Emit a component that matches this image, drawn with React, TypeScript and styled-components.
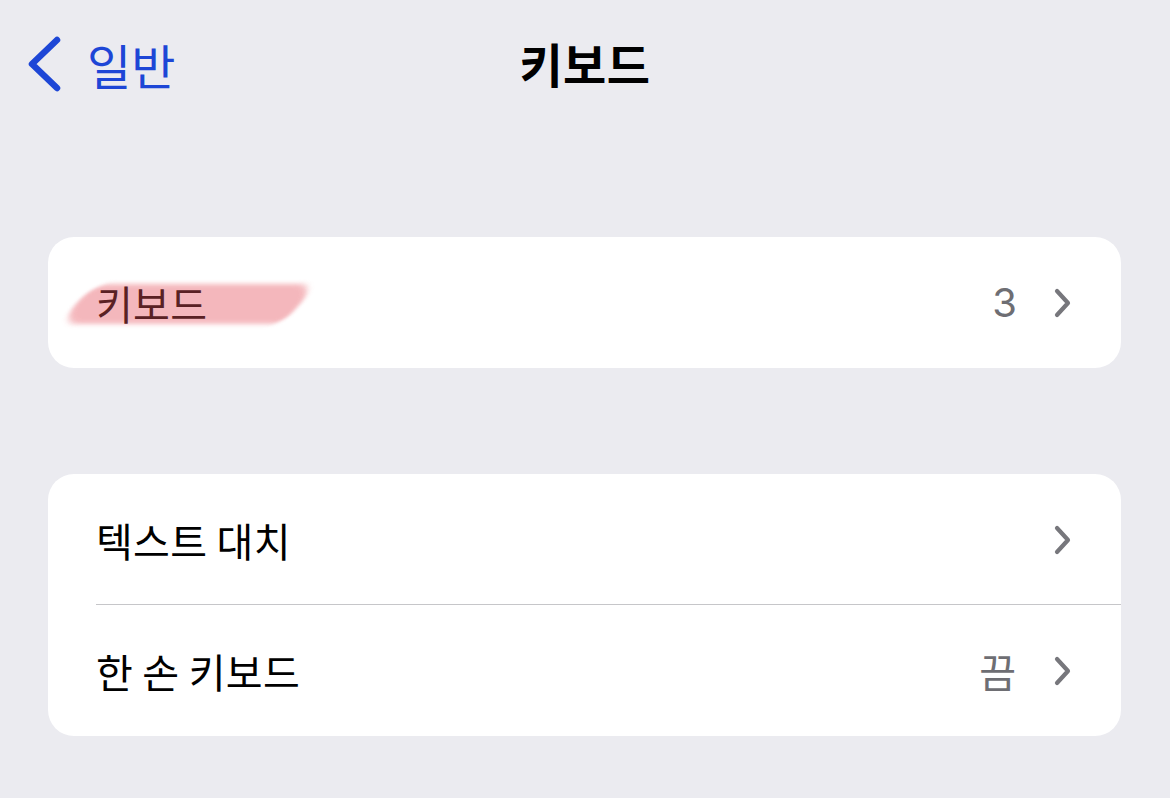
import styled, { createGlobalStyle } from "styled-components";

const GlobalStyle = createGlobalStyle`
    html, body {
        margin: 0;
        padding: 0;
        background-color: #ebebf0;
    }
    body {
        font-family: "Noto Sans CJK KR", "Noto Sans", sans-serif;
        -webkit-font-smoothing: antialiased;
    }
`;

const Page = styled.div`
    width: 1170px;
    height: 798px;
    background-color: #ebebf0;
    overflow: hidden;
`;

const NavBar = styled.div`
    height: 132px;
    display: grid;
    grid-template-columns: 1fr auto 1fr;
    align-items: center;
`;

const BackButton = styled.button`
    display: flex;
    align-items: center;
    gap: 25px;
    background: none;
    border: none;
    padding: 0;
    margin: -4px 0 0 26px;
    color: #1d46d6;
    font-family: inherit;
    font-size: 48px;
    justify-self: start;
    cursor: pointer;
`;

const Title = styled.h1`
    margin: 0;
    margin-top: -8px;
    font-size: 47px;
    font-weight: 700;
    color: #000;
    letter-spacing: 0.5px;
`;

const Content = styled.div`
    display: flex;
    flex-direction: column;
    gap: 106px;
    padding: 105px 49px 0 48px;
`;

const Group = styled.div`
    background-color: #fff;
    border-radius: 26px;
    overflow: hidden;
`;

const Row = styled.div<{ $divider?: boolean }>`
    height: 131px;
    display: flex;
    align-items: center;
    padding: 0 49px 0 48px;
    position: relative;

    ${({ $divider }) =>
        $divider &&
        `
        &::after {
            content: "";
            position: absolute;
            left: 48px;
            right: 0;
            bottom: 0;
            height: 1px;
            background-color: #c6c6c9;
        }
    `}
`;

const Label = styled.span<{ $marked?: boolean }>`
    position: relative;
    flex: 1;
    font-size: 40px;
    letter-spacing: 0.3px;
    color: ${({ $marked }) => ($marked ? "#5a2124" : "#000")};
    display: flex;
    align-items: center;
`;

const LabelText = styled.span`
    position: relative;
    z-index: 1;
`;

const Marker = styled.span`
    position: absolute;
    left: -20px;
    top: 50%;
    width: 224px;
    height: 40px;
    margin-top: -19px;
    background-color: #f2a6ac;
    opacity: 0.8;
    transform: skewX(-42deg);
    border-radius: 16px 20px 12px 20px;
    filter: blur(2.5px);
    z-index: 0;
`;

const Value = styled.span`
    font-size: 40px;
    color: #6e6e73;
    margin-right: 38px;
`;

const Digit = styled(Value)`
    font-family: "Inter", "Noto Sans", sans-serif;
    font-size: 40px;
    font-weight: 400;
    margin-right: 37px;
`;

const Chevron = () => (
    <svg width="18" height="30" viewBox="0 0 18 30" fill="none">
        <path
            d="M3 3 L14 15 L3 27"
            stroke="#77777c"
            strokeWidth="4.2"
            strokeLinecap="round"
            strokeLinejoin="round"
        />
    </svg>
);

const BackChevron = () => (
    <svg width="36" height="56" viewBox="0 0 36 56" fill="none">
        <path
            d="M31 4 L6 28 L31 52"
            stroke="#1d46d6"
            strokeWidth="6.5"
            strokeLinecap="round"
            strokeLinejoin="round"
        />
    </svg>
);

function App() {
    return (
        <Page>
            <GlobalStyle />
            <NavBar>
                <BackButton>
                    <BackChevron />
                    <span>일반</span>
                </BackButton>
                <Title>키보드</Title>
                <div />
            </NavBar>
            <Content>
                <Group>
                    <Row>
                        <Label $marked>
                            <Marker />
                            <LabelText>키보드</LabelText>
                        </Label>
                        <Digit>3</Digit>
                        <Chevron />
                    </Row>
                </Group>
                <Group>
                    <Row $divider>
                        <Label>텍스트 대치</Label>
                        <Chevron />
                    </Row>
                    <Row>
                        <Label>한 손 키보드</Label>
                        <Value>끔</Value>
                        <Chevron />
                    </Row>
                </Group>
            </Content>
        </Page>
    );
}

export default App;
